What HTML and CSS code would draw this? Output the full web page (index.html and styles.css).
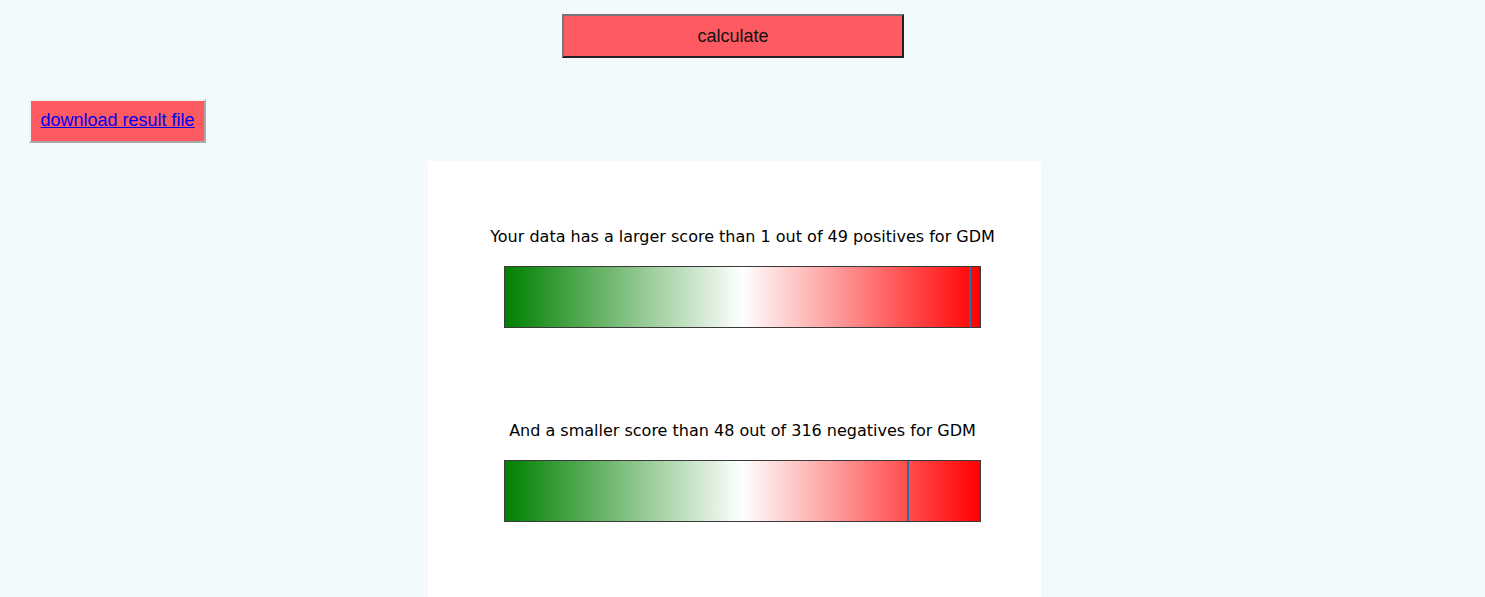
FILE: index.html
```html
<!DOCTYPE html>
<html>
<head>
<meta charset="utf-8">
<link rel="stylesheet" href="styles.css">
</head>
<body>
<div class="top">
  <button class="calc">calculate</button>
</div>
<div class="dl-row">
  <div class="dl"><a href="#">download result file</a></div>
</div>
<div class="panel">
  <div class="block first">
    <p class="caption">Your data has a larger score than 1 out of 49 positives for GDM</p>
    <div class="bar"><span class="marker" style="left: 97.7%"></span></div>
  </div>
  <div class="block second">
    <p class="caption">And a smaller score than 48 out of 316 negatives for GDM</p>
    <div class="bar"><span class="marker" style="left: 84.7%"></span></div>
  </div>
</div>
</body>
</html>
```
FILE: styles.css
```css
html, body {
  margin: 0;
  padding: 0;
  background: #f2fafc;
  height: 100%;
  overflow: hidden;
}
body {
  font-family: "Liberation Sans", Arial, sans-serif;
}
.top {
  display: flex;
  padding-top: 14px;
  padding-left: 562px;
}
.calc {
  width: 342px;
  height: 44px;
  margin: 0;
  background: #fe5a62;
  border: 2px solid;
  border-color: #767676 #222 #222 #767676;
  font-family: "Liberation Sans", Arial, sans-serif;
  font-size: 18px;
  color: #111;
  padding: 0;
}
.dl-row {
  display: flex;
  padding-top: 41px;
  padding-left: 29px;
}
.dl {
  width: 173px;
  height: 39px;
  background: #fe5a62;
  border: 2px solid;
  border-color: #eef4f6 #a9a9a9 #a9a9a9 #eef4f6;
  display: flex;
  align-items: center;
  justify-content: center;
  padding-bottom: 1px;
  box-sizing: content-box;
}
.dl a {
  color: #0000ee;
  font-size: 18px;
  text-decoration: underline;
}
.panel {
  margin-top: 18px;
  margin-left: 428px;
  width: 613px;
  height: 440px;
  background: #fff;
  box-sizing: border-box;
  padding-left: 76px;
  padding-right: 60px;
  padding-top: 66px;
  font-family: "DejaVu Sans", sans-serif;
}
.block {
  display: flex;
  flex-direction: column;
  align-items: center;
}
.second {
  margin-top: 93px;
}
.caption {
  margin: 0;
  font-size: 16px;
  line-height: 19px;
  color: #000;
  white-space: nowrap;
}
.bar {
  position: relative;
  margin-top: 20px;
  width: 477px;
  height: 62px;
  box-sizing: border-box;
  border: 1px solid #3a3a3a;
  background: linear-gradient(to right, #008000 0%, #ffffff 50%, #ff0000 100%);
}
.marker {
  position: absolute;
  top: 0;
  bottom: 0;
  width: 2px;
  background: #2b6fa8;
}
```
